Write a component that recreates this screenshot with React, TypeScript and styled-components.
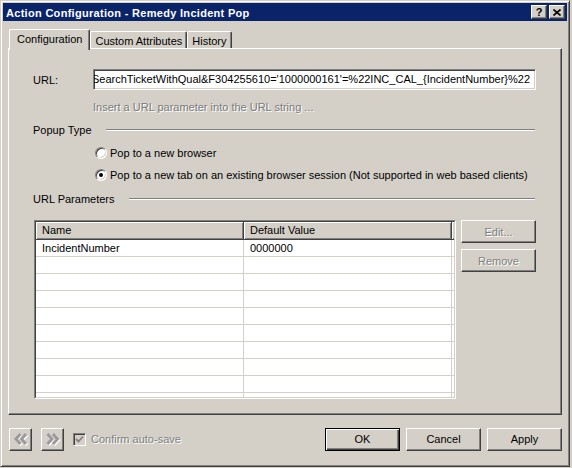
import React from "react";
import styled, { createGlobalStyle, css } from "styled-components";

const FACE = "#d4d0c8";

const GlobalStyle = createGlobalStyle`
  html, body {
    margin: 0;
    padding: 0;
    width: 572px;
    height: 468px;
    overflow: hidden;
    background: ${FACE};
  }
  body {
    font-family: "Liberation Sans", Arial, sans-serif;
    font-size: 11px;
    color: #000;
  }
`;

const Window = styled.div`
  width: 570px;
  height: 467px;
  box-sizing: border-box;
  background: ${FACE};
  border: 1px solid;
  border-color: ${FACE} #404040 #404040 ${FACE};
  box-shadow: inset 1px 1px #fff, inset -1px -1px #808080;
  padding: 2px;
  display: flex;
  flex-direction: column;
`;

const TitleBar = styled.div`
  height: 18px;
  background: #0a246a;
  color: #fff;
  display: flex;
  align-items: center;
  padding: 0 2px 0 2px;
  font-weight: bold;
  font-size: 11px;
  white-space: nowrap;
`;

const TitleText = styled.div`
  flex: 1;
  padding: 1px 0 0 1px;
  letter-spacing: 0.3px;
`;

const TitleButtons = styled.div`
  display: flex;
  gap: 2px;
`;

const TitleButton = styled.div`
  width: 16px;
  height: 14px;
  box-sizing: border-box;
  background: ${FACE};
  border: 1px solid;
  border-color: #fff #404040 #404040 #fff;
  box-shadow: inset -1px -1px #808080;
  color: #000;
  display: flex;
  align-items: center;
  justify-content: center;
  font-size: 11px;
  font-weight: bold;
  line-height: 1;
`;

const Body = styled.div`
  flex: 1;
  padding: 8px 5px 0;
  display: flex;
  flex-direction: column;
`;

const TabStrip = styled.div`
  display: flex;
  align-items: flex-end;
  height: 19px;
  padding-left: 1px;
`;

const Tab = styled.div<{ $active?: boolean }>`
  box-sizing: border-box;
  display: flex;
  align-items: flex-start;
  padding: 3px 4px 0;
  height: 17px;
  line-height: 13px;
  background: ${FACE};
  border-top: 1px solid #fff;
  border-left: 1px solid #fff;
  border-right: 1px solid #404040;
  box-shadow: inset -1px 0 #808080;
  border-radius: 2px 2px 0 0;
  white-space: nowrap;
  ${(p) =>
    p.$active &&
    css`
      position: relative;
      z-index: 1;
      height: 21px;
      margin-bottom: -2px;
      padding: 3px 7px 0;
    `}
`;

const Panel = styled.div`
  height: 367px;
  box-sizing: border-box;
  border: 1px solid;
  border-color: #fff #404040 #404040 #fff;
  box-shadow: inset -1px -1px #808080;
  padding: 0 25px 0 24px;
  display: flex;
  flex-direction: column;
`;

const FieldRow = styled.div`
  margin-top: 20px;
  display: flex;
  align-items: center;
  height: 21px;
`;

const FieldLabel = styled.div`
  width: 60px;
  flex-shrink: 0;
`;

const UrlBox = styled.div`
  flex: 1;
  height: 21px;
  box-sizing: border-box;
  background: #fff;
  border: 1px solid;
  border-color: #808080 #fff #fff #808080;
  box-shadow: inset 1px 1px #404040, inset -1px -1px ${FACE};
  overflow: hidden;
  white-space: nowrap;
  line-height: 19px;
  padding-left: 1px;
`;

const UrlText = styled.span`
  display: inline-block;
  margin-left: -3px;
`;

const Hint = styled.div`
  margin-top: 10px;
  padding-left: 60px;
  line-height: 14px;
  color: #7a7a7a;
  text-shadow: 1px 1px #fff;
`;

const Section = styled.div<{ $gap: number }>`
  margin-top: ${(p) => p.$gap}px;
  display: flex;
  align-items: center;
  gap: 14px;
  line-height: 14px;
  &::after {
    content: "";
    flex: 1;
    margin-right: 1px;
    border-top: 1px solid #808080;
    border-bottom: 1px solid #fff;
  }
`;

const RadioRow = styled.label<{ $gap: number }>`
  margin-top: ${(p) => p.$gap}px;
  padding-left: 62px;
  display: flex;
  align-items: center;
  gap: 3px;
  line-height: 14px;
`;

const Radio = styled.span<{ $checked?: boolean }>`
  width: 12px;
  height: 12px;
  box-sizing: border-box;
  border-radius: 50%;
  border: 1px solid;
  border-color: #808080 #fff #fff #808080;
  box-shadow: inset 1px 1px #404040, inset -1px -1px ${FACE};
  background: #fff;
  display: flex;
  align-items: center;
  justify-content: center;
  &::after {
    content: "";
    display: ${(p) => (p.$checked ? "block" : "none")};
    width: 4px;
    height: 4px;
    border-radius: 50%;
    background: #000;
  }
`;

const ParamsArea = styled.div`
  margin-top: 14px;
  display: flex;
  align-items: flex-start;
  gap: 5px;
  padding-left: 1px;
`;

const TableFrame = styled.div`
  width: 423px;
  height: 179px;
  box-sizing: border-box;
  border: 1px solid;
  border-color: #808080 #fff #fff #808080;
  background: #fff;
  overflow: hidden;
`;

const TableInner = styled.div`
  height: 100%;
  box-sizing: border-box;
  border: 1px solid;
  border-color: #404040 ${FACE} ${FACE} #404040;
  overflow: hidden;
`;

const Grid = styled.div`
  display: grid;
  grid-template-columns: 208px 208px 3px;
  grid-auto-rows: 17px;
  grid-template-rows: 18px;
`;

const HeadCell = styled.div`
  box-sizing: border-box;
  background: ${FACE};
  border-right: 1px solid #404040;
  border-bottom: 1px solid #404040;
  box-shadow: inset 1px 1px #fff, inset -1px -1px #808080;
  padding: 0 6px;
  line-height: 17px;
  white-space: nowrap;
  overflow: hidden;
`;

const Cell = styled.div`
  box-sizing: border-box;
  border-right: 1px solid ${FACE};
  border-bottom: 1px solid ${FACE};
  padding: 0 6px;
  line-height: 16px;
  white-space: nowrap;
`;

const SideButtons = styled.div`
  display: flex;
  flex-direction: column;
  gap: 6px;
`;

const Button = styled.div<{ $primary?: boolean; $disabled?: boolean }>`
  width: 75px;
  height: 23px;
  box-sizing: border-box;
  background: ${FACE};
  display: flex;
  align-items: center;
  justify-content: center;
  border: 1px solid;
  border-color: #fff #404040 #404040 #fff;
  box-shadow: inset -1px -1px #808080;
  color: ${(p) => (p.$disabled ? "#808080" : "#000")};
  text-shadow: ${(p) => (p.$disabled ? "1px 1px #fff" : "none")};
  ${(p) =>
    p.$primary &&
    css`
      border-color: #000;
      box-shadow: inset 1px 1px #fff, inset -1px -1px #404040,
        inset -2px -2px #808080;
    `}
`;

const Footer = styled.div`
  margin-top: 12px;
  display: flex;
  align-items: center;
  height: 24px;
  padding-left: 1px;
`;

const NavButton = styled(Button)`
  width: 23px;
  margin-right: 9px;
`;

const CheckRow = styled.div`
  display: flex;
  align-items: center;
  gap: 5px;
  color: #808080;
  text-shadow: 1px 1px #fff;
  margin-right: auto;
`;

const CheckBox = styled.span`
  width: 13px;
  height: 13px;
  box-sizing: border-box;
  border: 1px solid;
  border-color: #808080 #fff #fff #808080;
  box-shadow: inset 1px 1px #404040, inset -1px -1px ${FACE};
  background: ${FACE};
  display: flex;
  align-items: center;
  justify-content: center;
`;

const DialogButtons = styled.div`
  display: flex;
  gap: 6px;
`;

const Chevrons = ({ dir }: { dir: "left" | "right" }) => {
  const d =
    dir === "left"
      ? ["M7.5 2 L3 7 L7.5 12", "M13 2 L8.5 7 L13 12"]
      : ["M2.5 2 L7 7 L2.5 12", "M8 2 L12.5 7 L8 12"];
  return (
    <svg width="16" height="15" viewBox="0 0 16 15">
      {d.map((p) => (
        <path key={p + "s"} d={p} transform="translate(1 1)" stroke="#fff" strokeWidth="3" fill="none" />
      ))}
      {d.map((p) => (
        <path key={p} d={p} stroke="#9a9a9a" strokeWidth="3" fill="none" />
      ))}
    </svg>
  );
};

const rows = [
  { name: "IncidentNumber", value: "0000000" },
  ...Array.from({ length: 9 }, () => ({ name: "", value: "" })),
];

export default function App() {
  return (
    <>
      <GlobalStyle />
      <Window>
        <TitleBar>
          <TitleText>Action Configuration - Remedy Incident Pop</TitleText>
          <TitleButtons>
            <TitleButton>?</TitleButton>
            <TitleButton>
              <svg width="8" height="7" viewBox="0 0 8 7">
                <path d="M0.5 0.5 L7.5 6.5 M7.5 0.5 L0.5 6.5" stroke="#000" strokeWidth="1.6" />
              </svg>
            </TitleButton>
          </TitleButtons>
        </TitleBar>
        <Body>
          <TabStrip>
            <Tab $active>Configuration</Tab>
            <Tab>Custom Attributes</Tab>
            <Tab>History</Tab>
          </TabStrip>
          <Panel>
            <FieldRow>
              <FieldLabel>URL:</FieldLabel>
              <UrlBox>
                <UrlText>
                  SearchTicketWithQual&amp;F304255610='1000000161'=%22INC_CAL_{"{"}IncidentNumber{"}"}%22
                </UrlText>
              </UrlBox>
            </FieldRow>
            <Hint>Insert a URL parameter into the URL string ...</Hint>
            <Section $gap={9}>Popup Type</Section>
            <RadioRow $gap={9}>
              <Radio />
              Pop to a new browser
            </RadioRow>
            <RadioRow $gap={8}>
              <Radio $checked />
              Pop to a new tab on an existing browser session (Not supported in web based clients)
            </RadioRow>
            <Section $gap={10}>URL Parameters</Section>
            <ParamsArea>
              <TableFrame>
                <TableInner>
                  <Grid>
                    <HeadCell>Name</HeadCell>
                    <HeadCell>Default Value</HeadCell>
                    <HeadCell />
                    {rows.map((r, i) => (
                      <React.Fragment key={i}>
                        <Cell>{r.name}</Cell>
                        <Cell>{r.value}</Cell>
                        <Cell />
                      </React.Fragment>
                    ))}
                  </Grid>
                </TableInner>
              </TableFrame>
              <SideButtons>
                <Button $disabled>Edit...</Button>
                <Button $disabled>Remove</Button>
              </SideButtons>
            </ParamsArea>
          </Panel>
          <Footer>
            <NavButton $disabled>
              <Chevrons dir="left" />
            </NavButton>
            <NavButton $disabled>
              <Chevrons dir="right" />
            </NavButton>
            <CheckRow>
              <CheckBox>
                <svg width="9" height="9" viewBox="0 0 9 9">
                  <path d="M1 4 L3.5 6.5 L8 1.5" stroke="#808080" strokeWidth="1.8" fill="none" />
                </svg>
              </CheckBox>
              Confirm auto-save
            </CheckRow>
            <DialogButtons>
              <Button $primary>OK</Button>
              <Button>Cancel</Button>
              <Button>Apply</Button>
            </DialogButtons>
          </Footer>
        </Body>
      </Window>
    </>
  );
}
